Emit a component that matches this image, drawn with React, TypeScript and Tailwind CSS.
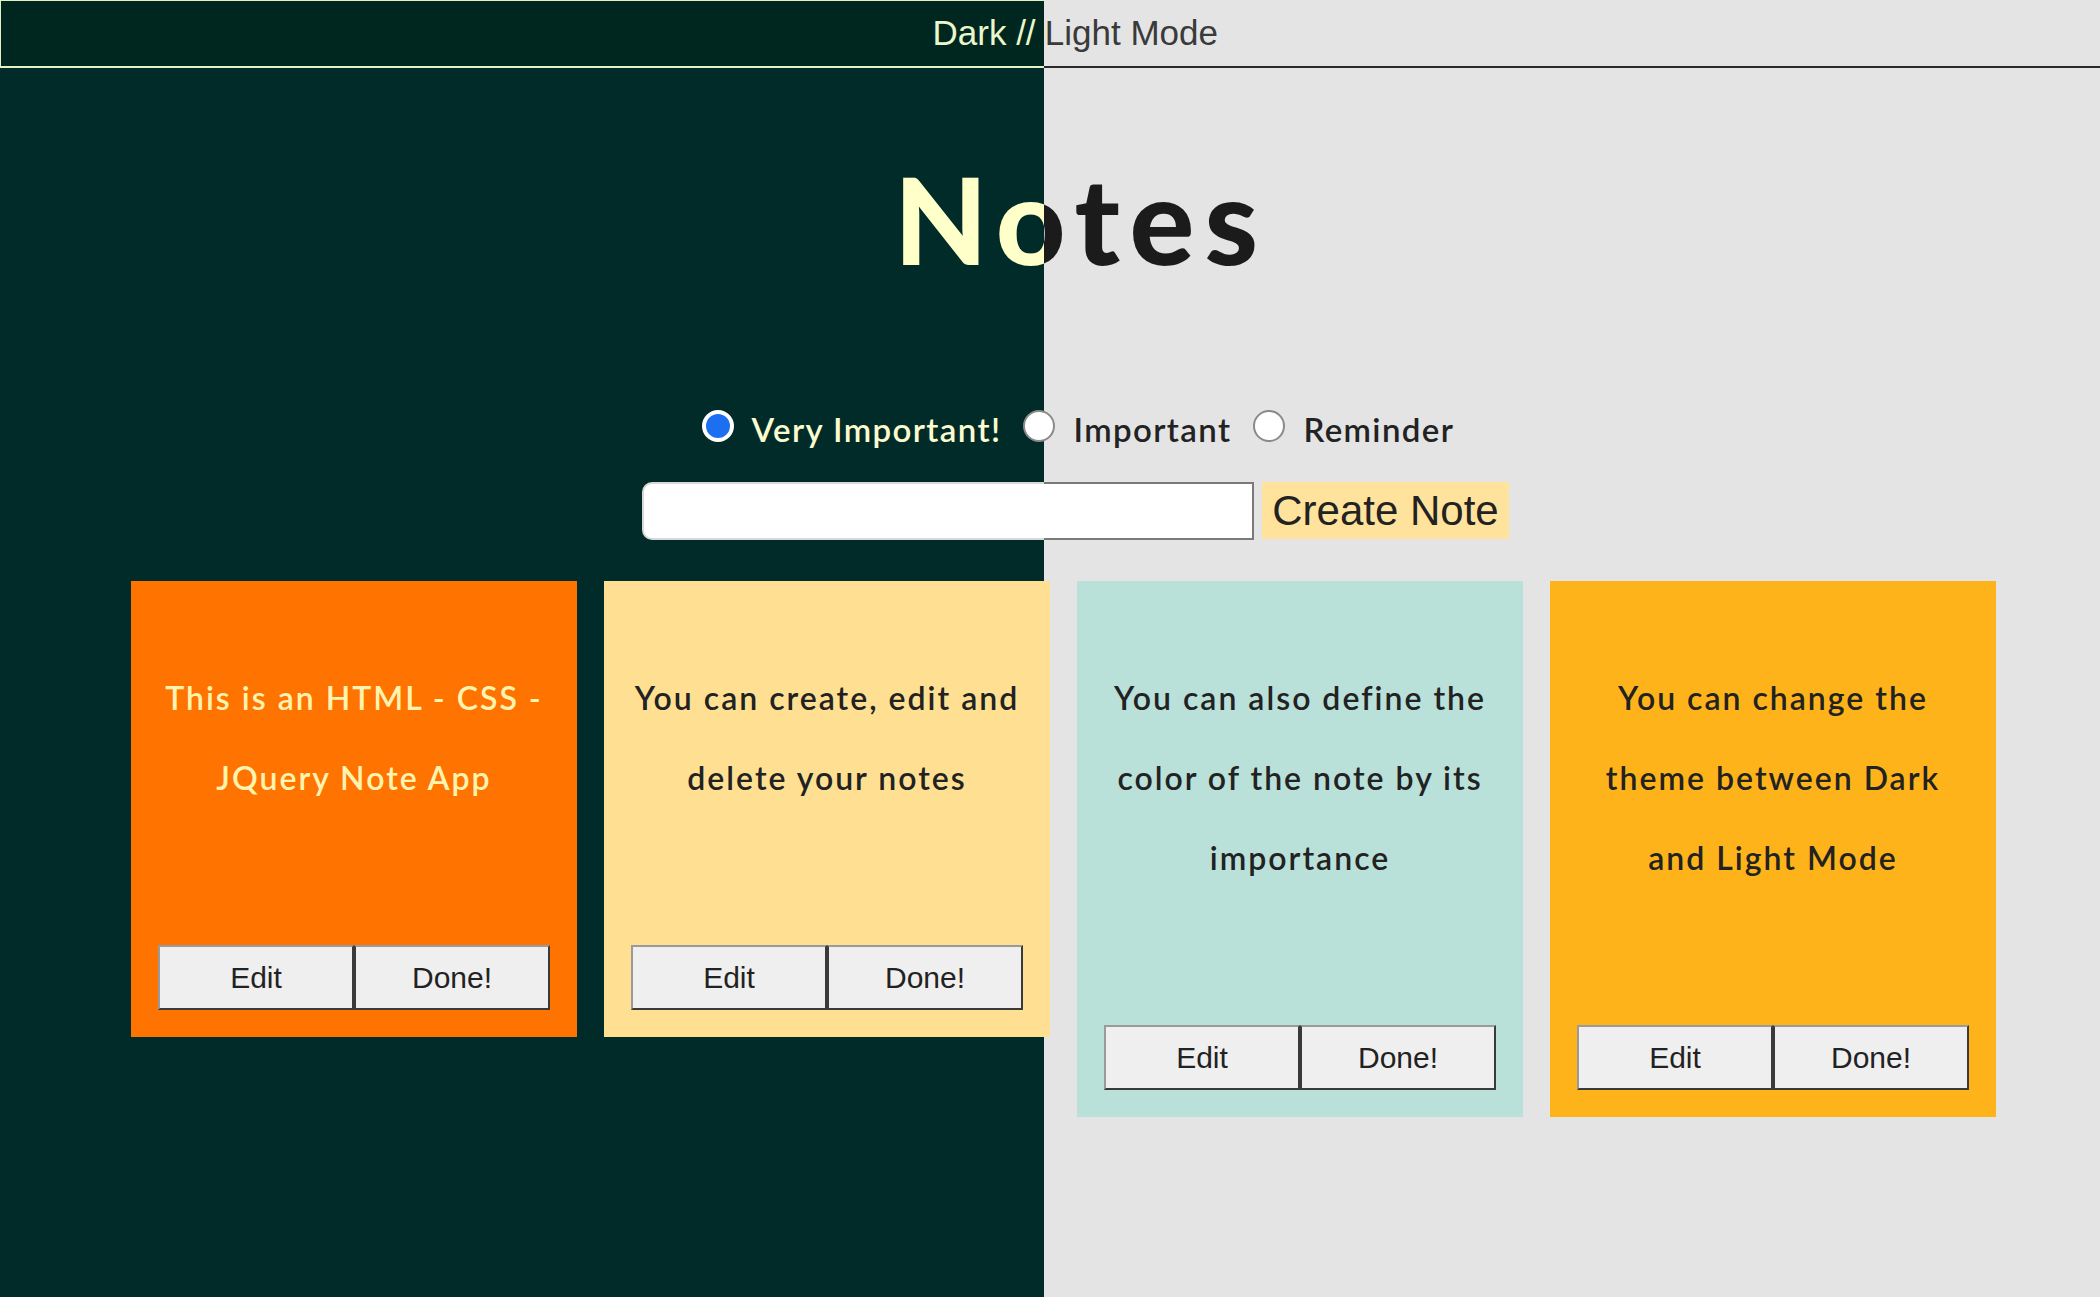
import React from "react";

const notes = [
  {
    text: ["This is an HTML - CSS -", "JQuery Note App"],
    bg: "bg-[#ff7300]",
    color: "text-[#fff3b0]",
  },
  {
    text: ["You can create, edit and", "delete your notes"],
    bg: "bg-[#ffe093]",
    color: "text-[#222]",
  },
  {
    text: ["You can also define the", "color of the note by its", "importance"],
    bg: "bg-[#b9e0d9]",
    color: "text-[#222]",
  },
  {
    text: ["You can change the", "theme between Dark", "and Light Mode"],
    bg: "bg-[#ffb31b]",
    color: "text-[#222]",
  },
];

const options = ["Very Important!", "Important", "Reminder"];

function Radio({ checked, dark }: { checked: boolean; dark: boolean }) {
  if (checked) {
    return (
      <span
        className={
          "block w-[32px] h-[32px] rounded-full bg-[#1c6ff0] border-[4px] " +
          (dark ? "border-white" : "border-[#1c6ff0] shadow-[inset_0_0_0_4px_white]")
        }
      />
    );
  }
  return <span className="block w-[32px] h-[32px] rounded-full bg-white border-2 border-[#8a8a8a]" />;
}

function NoteCard({ note }: { note: (typeof notes)[number] }) {
  return (
    <div className={`w-[446px] px-[27px] pb-[27px] pt-[77px] ${note.bg}`}>
      <p
        className={`text-center text-[32px] leading-[80px] font-semibold tracking-[2px] ${note.color}`}
        style={{ fontFamily: "Lato, 'Noto Sans', sans-serif" }}
      >
        {note.text.map((line) => (
          <span key={line} className="block">
            {line}
          </span>
        ))}
      </p>
      <div className="flex mt-[127px]" style={{ fontFamily: "'Liberation Sans', Arial, sans-serif" }}>
        <button className="w-[196px] h-[65px] bg-[#efefef] border-2 border-[#3a3a3a] border-t-[#9a9a9a] border-l-[#9a9a9a] text-[30px] text-[#222]">
          Edit
        </button>
        <button className="w-[196px] h-[65px] bg-[#efefef] border-2 border-[#3a3a3a] border-t-[#9a9a9a] text-[30px] text-[#222]">
          Done!
        </button>
      </div>
    </div>
  );
}

function Page({ dark }: { dark: boolean }) {
  const name = dark ? "prio-dark" : "prio-light";
  return (
    <div className={`w-[2100px] h-[1297px] ${dark ? "bg-[#012b29]" : "bg-[#e4e4e4]"}`}>
      {/* Theme switch */}
      <header
        className={
          "h-[68px] flex items-center justify-center pl-[50px] " +
          (dark
            ? "bg-[#00271f] border-t border-l border-b-2 border-[#e6f0c4]"
            : "border-b-2 border-[#2a2a2a]")
        }
      >
        <p
          className={`text-[35px] ${dark ? "text-[#eaf6cc]" : "text-[#3a3a3a]"}`}
          style={{ fontFamily: "'Liberation Sans', Arial, sans-serif" }}
        >
          Dark // Light Mode
        </p>
      </header>

      <h1
        className={`mt-[90px] flex justify-center pl-[62px] text-[121px] leading-none font-black tracking-[10px] ${
          dark ? "text-[#ffffca]" : "text-[#1b1b1b]"
        }`}
        style={{ fontFamily: "Lato, 'Noto Sans', sans-serif" }}
      >
        Notes
      </h1>

      {/* Priority */}
      <div
        className="mt-[131px] h-[40px] flex items-center justify-center pl-[56px]"
        style={{ fontFamily: "Lato, 'Noto Sans', sans-serif" }}
      >
        {options.map((opt, i) => (
          <label key={opt} className={`flex items-center ${i > 0 ? "ml-[22px]" : ""}`}>
            <input type="radio" name={name} className="hidden" defaultChecked={i === 0} />
            <span className="-mt-[8px]">
              <Radio checked={i === 0} dark={dark} />
            </span>
            <span
              className={`ml-[18px] text-[33px] font-semibold tracking-[1.4px] ${
                dark ? "text-[#fbfbcf]" : "text-[#222]"
              }`}
            >
              {opt}
            </span>
          </label>
        ))}
      </div>

      {/* New note */}
      <div className="mt-[32px] flex justify-center pl-[51px] gap-[8px]">
        <input
          type="text"
          className={`w-[612px] h-[58px] rounded-l-[10px] bg-white border-2 outline-none ${
            dark ? "border-[#d8d8d8]" : "border-[#7a7a7a]"
          }`}
        />
        <button
          className="w-[247px] h-[57px] bg-[#ffe29c] text-[42px] leading-none text-[#222]"
          style={{ fontFamily: "'Liberation Sans', Arial, sans-serif" }}
        >
          Create Note
        </button>
      </div>

      {/* Notes */}
      <div className="mt-[41px] flex items-start justify-center pl-[27px] gap-[27px]">
        {notes.map((note) => (
          <NoteCard key={note.text[0]} note={note} />
        ))}
      </div>
    </div>
  );
}

export default function App() {
  return (
    <div className="relative w-[2100px] h-[1300px] bg-white overflow-hidden">
      <Page dark={false} />
      {/* dark half laid over the light one */}
      <div className="absolute top-0 left-0 w-[1044px] h-[1297px] overflow-hidden">
        <Page dark={true} />
      </div>
    </div>
  );
}
